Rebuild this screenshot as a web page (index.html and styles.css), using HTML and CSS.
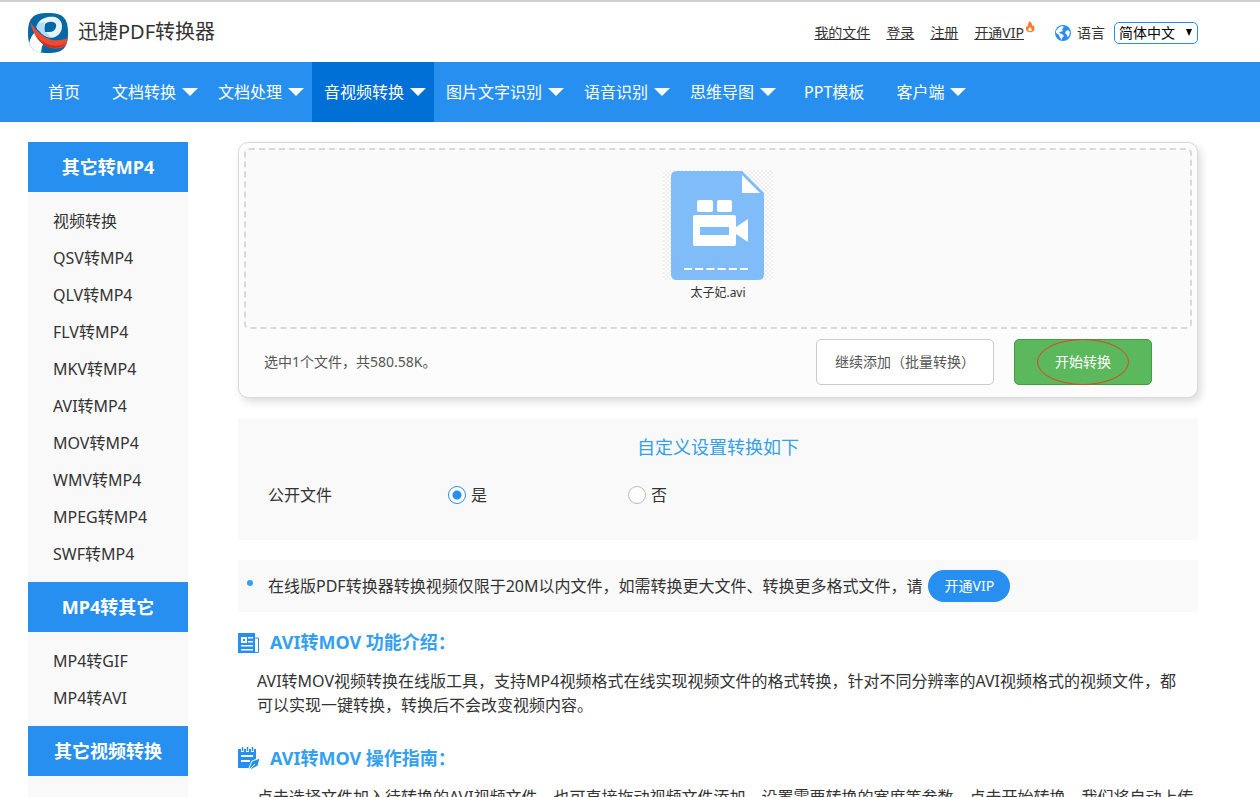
FILE: index.html
```html
<!DOCTYPE html>
<html lang="zh-CN">
<head>
<meta charset="utf-8">
<title>迅捷PDF转换器</title>
<link rel="stylesheet" href="styles.css">
</head>
<body>
<header class="top">
  <a class="brand" href="#">
    <svg class="logo" viewBox="0 0 40 40" aria-hidden="true">
      <defs><clipPath id="tile"><path d="M20 0C35 0 40 5 40 20S35 40 20 40 0 35 0 20 5 0 20 0Z"/></clipPath></defs>
      <g clip-path="url(#tile)">
        <rect width="40" height="40" fill="#0568a6"/>
        <path d="M2 27Q4 22 7 19L16 29Q13 34 13 40H0V34Z" fill="#fff"/>
        <path d="M10 10C14 4 22 3 27 4C34 6 36 14 32 20C29 24 24 26 19 24L9 16Z" fill="#e4f5ff"/>
        <path d="M10 10L17 9Q14 14 18 19L23 24Q17 25 12 19L8 14Z" fill="#b4dcf6"/>
        <path d="M17 11Q20 8 25 9Q29 10 28 14Q27 19 21 19H17Q16 14 17 11Z" fill="#0568a6"/>
        <path d="M2 9Q12 24 24 27Q32 28 40 25L38 32Q31 38 20 34Q7 28 2 9Z" fill="#ee4b30"/>
        <path d="M6 20Q12 29 22 32Q31 34 38 30Q32 37 20 34Q11 30 6 20Z" fill="#c93021"/>
      </g>
    </svg>
    <span>迅捷PDF转换器</span>
  </a>
  <div class="tools">
    <a href="#">我的文件</a>
    <a href="#">登录</a>
    <a href="#">注册</a>
    <span class="vip-link"><a href="#">开通VIP</a><svg class="flame" viewBox="0 0 9 12" aria-hidden="true"><path d="M4 0Q7 2 7 5L8 4Q10 8 8 10Q6 12 3 11Q-1 9 1 5L2 6Q2 3 4 0Z" fill="#ff7b32"/><path d="M4.500 6Q7 8 6 10H3Q2 8 4.500 6Z" fill="#fff"/></svg></span>
    <label class="language" for="lang">
      <svg class="globe" viewBox="0 0 16 16" aria-hidden="true"><circle cx="8" cy="8" r="8" fill="#278ff0"/><path d="M1 6Q3 2 7 1L9 2 7 4 8 6 5 7 4 8 7 9 9 11 7 13 7 15 5 13 4 10 1 8ZM11 6L13 5 15 7 14 11 12 12 12 10 10 8Z" fill="#fff"/></svg>
      语言
    </label>
    <span class="picker"><select id="lang"><option>简体中文</option></select></span>
  </div>
</header>
<nav class="nav">
  <a class="plain" href="#">首页</a>
  <a class="drop" href="#">文档转换</a>
  <a class="drop" href="#">文档处理</a>
  <a class="drop active" href="#">音视频转换</a>
  <a class="drop" href="#">图片文字识别</a>
  <a class="drop" href="#">语音识别</a>
  <a class="drop" href="#">思维导图</a>
  <a class="plain" href="#">PPT模板</a>
  <a class="drop" href="#">客户端</a>
</nav>
<div class="page">
  <aside class="side">
    <h2>其它转MP4</h2>
    <ul>
      <li><a href="#">视频转换</a></li>
      <li><a href="#">QSV转MP4</a></li>
      <li><a href="#">QLV转MP4</a></li>
      <li><a href="#">FLV转MP4</a></li>
      <li><a href="#">MKV转MP4</a></li>
      <li><a href="#">AVI转MP4</a></li>
      <li><a href="#">MOV转MP4</a></li>
      <li><a href="#">WMV转MP4</a></li>
      <li><a href="#">MPEG转MP4</a></li>
      <li><a href="#">SWF转MP4</a></li>
    </ul>
    <h2>MP4转其它</h2>
    <ul>
      <li><a href="#">MP4转GIF</a></li>
      <li><a href="#">MP4转AVI</a></li>
    </ul>
    <h2>其它视频转换</h2>
  </aside>
  <main class="main">
    <section class="upload">
      <div class="dropzone">
        <div class="thumb">
          <svg viewBox="0 0 110 110" aria-hidden="true">
            <path d="M14 1H79L101 23V104Q101 110 95 110H14Q8 110 8 104V7Q8 1 14 1Z" fill="#7fbcf8"/>
            <path d="M79 5V23H97Z" fill="#fff"/>
            <rect x="34" y="30" width="16" height="12" rx="2" fill="#fff"/>
            <rect x="54" y="30" width="15" height="12" rx="2" fill="#fff"/>
            <path d="M32 45H71Q73 45 73 47V57L85 49V72L73 64V74Q73 76 71 76H32Q30 76 30 74V47Q30 45 32 45ZM37 57V65H66V57Z" fill="#fff" fill-rule="evenodd"/>
            <path d="M21 99H86" stroke="#fff" stroke-width="2" stroke-dasharray="8 3.200"/>
          </svg>
        </div>
        <div class="filename">太子妃.avi</div>
      </div>
      <div class="actions">
        <p>选中1个文件，共580.58K。</p>
        <button class="more" type="button">继续添加（批量转换）</button>
        <button class="start" type="button">开始转换</button>
      </div>
    </section>
    <section class="options">
      <h3>自定义设置转换如下</h3>
      <div class="choices" role="radiogroup" aria-labelledby="public">
        <span id="public">公开文件</span>
        <label><input type="radio" name="public" checked>是</label>
        <label><input type="radio" name="public">否</label>
      </div>
    </section>
    <section class="notice">
      <p>在线版PDF转换器转换视频仅限于20M以内文件，如需转换更大文件、转换更多格式文件，请</p>
      <a class="pill" href="#">开通VIP</a>
    </section>
    <section class="article">
      <h3>
        <svg viewBox="0 0 22 24" aria-hidden="true"><path d="M0 3H17V23H0Z" fill="#278ff0"/><path d="M17 8H20.500V22.500H16" fill="none" stroke="#278ff0"/><path d="M3 7H9V13H3ZM5 9V11H7V9ZM10 7H15V8.500H10ZM10 11H15V12.500H10ZM3 15H15V16.500H3ZM3 19H15V20.500H3Z" fill="#fff" fill-rule="evenodd"/></svg>
        AVI转MOV 功能介绍：
      </h3>
      <p>AVI转MOV视频转换在线版工具，支持MP4视频格式在线实现视频文件的格式转换，针对不同分辨率的AVI视频格式的视频文件，都可以实现一键转换，转换后不会改变视频内容。</p>
    </section>
    <section class="article guide">
      <h3>
        <svg viewBox="0 0 22 24" aria-hidden="true"><path d="M0 3H18V13L11 22H0Z" fill="#278ff0"/><path d="M4.500 0V6M9.500 0V6M14.500 0V6" stroke="#fff" stroke-width="3"/><path d="M4.500 1V5M9.500 1V5M14.500 1V5" stroke="#278ff0" stroke-width="1.500"/><path d="M3 9H15V11H3ZM3 14H12V16H3Z" fill="#fff"/><path d="M22 12L20 20 12 24 11 22 14 15Z" fill="#278ff0" stroke="#fff"/><path d="M12 23L17 18" stroke="#fff"/></svg>
        AVI转MOV 操作指南：
      </h3>
      <p>点击选择文件加入待转换的AVI视频文件，也可直接拖动视频文件添加。设置需要转换的宽度等参数，点击开始转换，我们将自动上传</p>
    </section>
  </main>
</div>
</body>
</html>
```
FILE: styles.css
```css
* { box-sizing: border-box; }
body {
  display: flex;
  flex-direction: column;
  margin: 0;
  height: 100vh;
  overflow: hidden;
  border-top: 2px solid #d0d0d0;
  background: #fff;
  color: #333;
  font: 16px/24px "Noto Sans", "Noto Sans CJK SC", sans-serif;
}
h2, h3, p, ul { margin: 0; padding: 0; }
ul { list-style: none; }
a { color: inherit; text-decoration: none; }

.top {
  display: flex;
  flex: none;
  align-items: center;
  justify-content: space-between;
  height: 60px;
  padding: 2px 62px 0 28px;
}
.brand { display: flex; align-items: center; gap: 10px; font-size: 20px; }
.brand span { padding-bottom: 2px; }
.logo { width: 40px; height: 40px; }
.tools { display: flex; align-items: center; gap: 16px; font-size: 14px; }
.tools a { text-decoration: underline; }
.vip-link { display: flex; }
.flame { width: 10px; height: 12px; margin-left: 1px; }
.language { display: flex; align-items: center; gap: 6px; margin-left: 4px; }
.globe { width: 16px; height: 16px; }
.picker { position: relative; margin-left: -7px; }
.picker::after {
  content: "";
  position: absolute;
  right: 6px;
  top: 7px;
  border: solid transparent;
  border-width: 7px 3px 0;
  border-top-color: #000;
  pointer-events: none;
}
.picker select {
  display: block;
  appearance: none;
  width: 84px;
  height: 22px;
  padding: 0 4px;
  border: 1px solid #278ff0;
  border-radius: 5px;
  background: #fff;
  color: #000;
  font: 14px/20px "Noto Sans", "Noto Sans CJK SC", sans-serif;
}

.nav { display: flex; flex: none; height: 60px; padding-left: 28px; background: #278ff0; color: #fff; }
.nav a { display: flex; align-items: center; gap: 6px; white-space: nowrap; }
.plain { padding: 0 20px; }
.drop { padding: 0 8px 0 12px; }
.drop::after {
  content: "";
  border: solid transparent;
  border-width: 8px 8px 0;
  border-top-color: #fff;
}
.nav .active { background: #006fd6; }

.page { display: flex; flex: 1; min-height: 0; gap: 50px; padding: 20px 62px 0 28px; }
.side { flex: 0 0 160px; background: #f9f9f9; }
.side h2 {
  background: #278ff0;
  color: #fff;
  font-size: 18px;
  line-height: 50px;
  text-align: center;
}
.side ul { padding: 11px 0 9px; }
.side li { padding-left: 25px; line-height: 37px; }
.main { flex: 1; min-width: 0; }

.upload {
  padding: 5px 5px 0;
  border: 1px solid #d9d9d9;
  border-radius: 10px;
  background: #fcfcfc;
  box-shadow: 3px 4px 8px #ddd;
}
.dropzone {
  display: flex;
  flex-direction: column;
  align-items: center;
  height: 181px;
  padding-top: 20px;
  border: 2px dashed #d9d9d9;
  border-radius: 5px;
  background: #fafafa;
}
.thumb {
  width: 110px;
  height: 110px;
  background: repeating-conic-gradient(#eee 0 25%, #fff 0 50%) 0 0 / 4px 4px;
}
.thumb svg { display: block; }
.filename { font-size: 12px; line-height: 26px; }
.actions { display: flex; align-items: center; gap: 20px; padding: 10px 40px 12px 20px; font-size: 14px; }
.actions p { flex: 1; color: #555; }
.actions button { height: 46px; border-radius: 5px; font: inherit; }
.more { width: 178px; padding: 0; border: 1px solid #ccc; background: #fff; color: #555; }
.start { position: relative; width: 138px; border: 1px solid #449d44; background: #5cb85c; color: #fff; }
.start::after {
  content: "";
  position: absolute;
  inset: -1px 22px;
  border: 1px solid #d9482f;
  border-radius: 50%;
}

.options { height: 122px; margin-top: 20px; padding-top: 17px; background: #f9f9f9; }
.options h3 { color: #33a0e8; font-size: 18px; font-weight: 400; text-align: center; }
.choices { display: flex; padding: 24px 30px; line-height: 24px; }
.choices > * { width: 180px; }
.choices label { display: flex; align-items: center; gap: 5px; }
.choices input {
  appearance: none;
  width: 18px;
  height: 18px;
  margin: 0;
  border: 1px solid #bbb;
  border-radius: 50%;
  background: #fff;
}
.choices input:checked { border-color: #278ff0; background: radial-gradient(circle, #278ff0 4px, #fff 5px); }

.notice {
  position: relative;
  display: flex;
  align-items: center;
  gap: 6px;
  height: 52px;
  margin-top: 20px;
  padding-left: 30px;
  background: #f9f9f9;
  white-space: nowrap;
}
.notice::before {
  content: "";
  position: absolute;
  left: 9px;
  top: 20px;
  width: 6px;
  height: 6px;
  border-radius: 50%;
  background: #33a0f0;
}
.pill { padding: 0 16px; border-radius: 16px; background: #278ff0; color: #fff; font-size: 14px; line-height: 32px; }

.article { padding-top: 18px; }
.article h3 { display: flex; align-items: center; gap: 10px; color: #33a0f0; font-size: 18px; line-height: 24px; }
.article svg { width: 22px; height: 24px; }
.article p { padding: 15px 10px 11px 19px; }
.guide p { padding-right: 0; }
```
